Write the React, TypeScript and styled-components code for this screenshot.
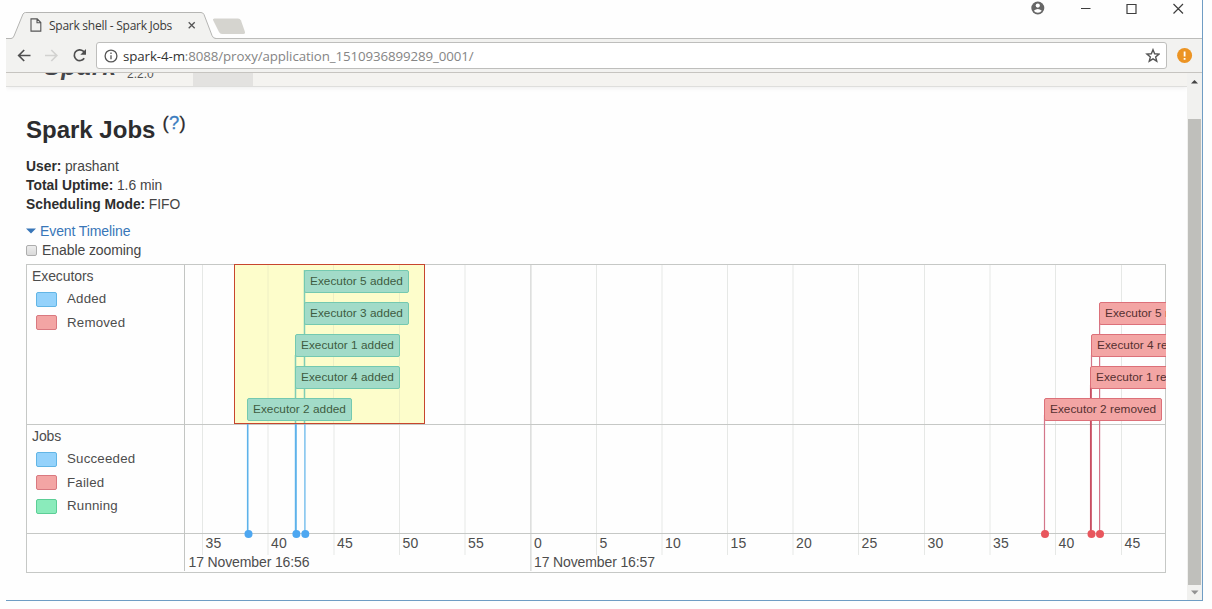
import React from "react";
import styled, { createGlobalStyle } from "styled-components";

const GlobalStyle = createGlobalStyle`
  *, *::before, *::after { box-sizing: border-box; }
  body { margin: 0; background: #fefefe; overflow: hidden; }
  #root { width: 1212px; height: 609px; }
`;

const Desktop = styled.div`
  width: 1212px;
  height: 609px;
  padding-left: 6px;
  background: #fefefe;
  font-family: "Liberation Sans", Arial, sans-serif;
  color: #333;
`;

const BrowserWindow = styled.div`
  display: flex;
  flex-direction: column;
  width: 1197px;
  height: 601px;
  border-right: 1px solid #6f9dc4;
  border-bottom: 1px solid #6f9dc4;
`;

const TabStrip = styled.div`
  position: relative;
  display: flex;
  justify-content: space-between;
  flex: none;
  height: 39px;
  border-bottom: 1px solid #bcbcba;
`;

const TabShapes = styled.svg`
  position: absolute;
  left: 0;
  top: 0;
`;

const Tab = styled.div`
  position: relative;
  display: flex;
  align-items: center;
  height: 26px;
  margin: 12px 0 0 24px;
`;

const TabTitle = styled.span`
  width: 138px;
  margin-left: 7px;
  font: 12px "Open Sans", "Noto Sans", sans-serif;
  letter-spacing: -0.26px;
  white-space: nowrap;
  color: #3a3a3a;
`;

const WindowControls = styled.div`
  display: flex;
  height: 18px;
  margin-right: 17px;
`;

const Toolbar = styled.div`
  display: flex;
  align-items: center;
  flex: none;
  height: 34px;
  background: #f2f2f0;
  border-bottom: 1px solid #c6c4c0;
`;

const NavIcons = styled.svg`
  flex: none;
`;

const AddressBar = styled.div`
  display: flex;
  align-items: center;
  width: 1071px;
  height: 27px;
  padding: 0 6px 0 7px;
  background: #fff;
  border: 1px solid #bebebc;
  border-radius: 3px;
`;

const Url = styled.span`
  flex: 1;
  margin-left: 5px;
  font: 13.3px "Open Sans", "Noto Sans", sans-serif;
  letter-spacing: -0.1px;
  white-space: nowrap;
  color: #858585;
`;

const UrlHost = styled.span`
  color: #333;
`;

const Warning = styled.svg`
  margin-left: 10px;
`;

const Viewport = styled.div`
  display: flex;
  flex: 1;
  min-height: 0;
`;

const Page = styled.main`
  width: 1181px;
  overflow: hidden;
`;

const SiteHeader = styled.div`
  display: flex;
  align-items: flex-end;
  height: 14px;
  background: #f4f3f0;
  border-bottom: 1px solid #dededc;
  box-shadow: 0 1px 5px rgba(0, 0, 0, 0.07);
  overflow: hidden;
`;

const Wordmark = styled.span`
  width: 80px;
  height: 28px;
  margin: 0 0 5px 38px;
  font-size: 24px;
  font-weight: bold;
  font-style: italic;
  letter-spacing: 1.3px;
  line-height: 28px;
  color: #45464a;
`;

const Version = styled.span`
  width: 69px;
  padding-left: 3px;
  margin-bottom: 5px;
  font-size: 12px;
  line-height: 14px;
  letter-spacing: 0;
  color: #555;
`;

const ActiveNav = styled.span`
  width: 60px;
  height: 13px;
  background: #e3e2e0;
`;

const Content = styled.div`
  padding: 26px 20px 0;
`;

const Heading = styled.h1`
  height: 40px;
  margin: 0;
  padding-top: 2px;
  font-size: 24px;
  line-height: 30px;
  white-space: pre;
  color: #2c2c2e;
`;

const Help = styled.sup`
  position: relative;
  top: -9px;
  left: 0.5px;
  font-size: 18.4px;
  font-weight: normal;
  line-height: 0;
  vertical-align: baseline;
  letter-spacing: 0.3px;
  color: #2c2c2e;
  -webkit-text-stroke: 0.3px currentColor;
`;

const HelpLink = styled.a`
  color: #3a7cc0;
`;

const Facts = styled.dl`
  margin: 4px 0 8px;
  font-size: 13.85px;
  line-height: 18.9px;
  color: #454545;
`;

const Fact = styled.div`
  display: flex;
  gap: 3.5px;
`;

const FactName = styled.dt`
  font-weight: bold;
  color: #2e2e2e;
`;

const FactValue = styled.dd`
  margin: 0;
`;

const TimelineToggle = styled.a`
  display: flex;
  align-items: center;
  gap: 4px;
  height: 19px;
  font-size: 14px;
  letter-spacing: -0.1px;
  color: #3876b8;
`;

const ZoomOption = styled.label`
  display: flex;
  align-items: center;
  gap: 5px;
  height: 19px;
  font-size: 14px;
  letter-spacing: -0.08px;
  color: #454545;
`;

const Box = styled.span`
  width: 11px;
  height: 11px;
  background: linear-gradient(#ececec, #dadada);
  border: 1px solid #adadad;
  border-radius: 2px;
`;

const Timeline = styled.section`
  display: flex;
  width: 1140px;
  height: 309px;
  margin-top: 4px;
  border: 1px solid #c6c8c6;
`;

const Groups = styled.div`
  width: 157px;
  flex: none;
`;

const Group = styled.div<{ $height: number }>`
  height: ${(p) => p.$height}px;
  padding: 2px 0 0 5px;
  border-bottom: 1px solid #c6c8c6;
  font-size: 14px;
  line-height: 18px;
  letter-spacing: -0.1px;
  color: #4d4d4d;
`;

const Legend = styled.div`
  display: flex;
  flex-direction: column;
  gap: 8px;
  margin-top: 7px;
`;

const LegendRow = styled.div`
  display: flex;
  align-items: center;
  gap: 10px;
  height: 15.5px;
  padding-left: 4px;
  font-size: 13.3px;
  letter-spacing: 0.2px;
`;

const Swatch = styled.span<{ $fill: string; $line: string }>`
  width: 21px;
  height: 15px;
  background: ${(p) => p.$fill};
  border: 1px solid ${(p) => p.$line};
  border-radius: 2px;
`;

const Plot = styled.div`
  position: relative;
  flex: 1;
  overflow: hidden;
`;

const Grid = styled.svg`
  display: block;
`;

const EventBox = styled.div<{ $x: number; $y: number; $w: number; $kind: "added" | "removed" }>`
  position: absolute;
  left: ${(p) => p.$x}px;
  top: ${(p) => p.$y}px;
  width: ${(p) => p.$w}px;
  height: 23px;
  padding-left: 5px;
  font-size: 11.8px;
  letter-spacing: 0.03px;
  line-height: 21px;
  white-space: nowrap;
  border: 1px solid ${(p) => (p.$kind === "added" ? "#74c9b0" : "#dc7079")};
  background: ${(p) => (p.$kind === "added" ? "#a2dbc8" : "#f3a5a4")};
  color: ${(p) => (p.$kind === "added" ? "#3e5c41" : "#553030")};
  border-radius: 2px;
`;

const Highlight = styled.div`
  position: absolute;
  left: 50px;
  top: -1px;
  width: 191px;
  height: 160px;
  background: #fdfdcb;
  border: 1px solid #c7452d;
`;

const PlotFrame = styled.div`
  position: relative;
  display: flex;
  flex: 1;
`;

const ScrollBar = styled.div`
  display: flex;
  flex-direction: column;
  align-items: center;
  width: 15px;
  background: #f1f1ef;
`;

const Thumb = styled.div`
  width: 13px;
  height: 466px;
  background: #bfbfbb;
`;

const ScrollArrow = styled.svg`
  flex: none;
`;

// Horizontal positions inside the plot, measured from the group column divider.
const ticks = [
  { x: 18, label: "35" }, { x: 83.5, label: "40" }, { x: 149.5, label: "45" },
  { x: 215, label: "50" }, { x: 280.5, label: "55" }, { x: 346.4, label: "0" },
  { x: 412, label: "5" }, { x: 477.5, label: "10" }, { x: 543, label: "15" },
  { x: 608.5, label: "20" }, { x: 674, label: "25" }, { x: 740, label: "30" },
  { x: 805.5, label: "35" }, { x: 871, label: "40" }, { x: 937, label: "45" },
];

type TimelineEvent = { x: number; y: number; w: number; text: string; kind: "added" | "removed" };

const events: TimelineEvent[] = [
  { x: 120, y: 5.5, w: 105, text: "Executor 5 added", kind: "added" },
  { x: 120, y: 37.5, w: 105, text: "Executor 3 added", kind: "added" },
  { x: 111, y: 69, w: 105, text: "Executor 1 added", kind: "added" },
  { x: 111, y: 101, w: 105, text: "Executor 4 added", kind: "added" },
  { x: 63, y: 133, w: 105, text: "Executor 2 added", kind: "added" },
  { x: 915, y: 37.5, w: 118, text: "Executor 5 removed", kind: "removed" },
  { x: 907, y: 69, w: 118, text: "Executor 4 removed", kind: "removed" },
  { x: 906, y: 101, w: 118, text: "Executor 1 removed", kind: "removed" },
  { x: 860, y: 133, w: 118, text: "Executor 2 removed", kind: "removed" },
];

function GroupPanel({ title, height, rows }: { title: string; height: number; rows: string[][] }) {
  return (
    <Group $height={height}>
      {title}
      <Legend>
        {rows.map(([label, fill, line]) => (
          <LegendRow key={label}><Swatch $fill={fill} $line={line} />{label}</LegendRow>
        ))}
      </Legend>
    </Group>
  );
}

function TimelineGrid() {
  return (
    <>
      {ticks.map((t) => {
        const minute = t.label === "0";
        return (
          <line key={t.x} x1={t.x + 0.5} x2={t.x + 0.5} y1={0} y2={minute ? 306 : 290}
            stroke={minute ? "#c9cbc9" : "#e6e8e6"} />
        );
      })}
      <path d="M0 159.5H982M0 268.5H982" stroke="#c6c8c6" />
      <path d="M0.5 0V306" stroke="#c3c5c3" />
    </>
  );
}

export default function App() {
  return (
    <>
      <GlobalStyle />
      <Desktop>
        <BrowserWindow>
          <TabStrip>
            <TabShapes width="260" height="39">
              <path d="M5 38.5 Q7 38.5 8 36 L17 14 Q18 12.5 19.5 12.5 H195 Q197 12.5 198 14.5 L206 35.5 Q207 38.5 210 38.5 V39 H5Z" fill="#f2f2f0" />
              <path d="M0 38.5H5 Q7 38.5 8 36 L17 14 Q18 12.5 19.5 12.5 H195 Q197 12.5 198 14.5 L206 35.5 Q207 38.5 210 38.5" fill="none" stroke="#b5b5b3" />
              <path d="M208.500 18.500 H232 Q234 18.500 235 20.500 L239 32 Q239.500 34 237.500 34 H216 Q214 34 213 32 L207 20 Q206.500 18.500 208.500 18.500Z" fill="#d5d4cf" />
            </TabShapes>
            <Tab>
              <svg width="12" height="14" viewBox="0 0 12 14" fill="none" stroke="#555" strokeWidth="1.1">
                <path d="M1 .9h6.200l3.600 3.600v8.600H1zM7 .9v3.800h3.800" />
              </svg>
              <TabTitle>Spark shell - Spark Jobs</TabTitle>
              <svg width="9" height="9" viewBox="0 0 9 9" stroke="#555" strokeWidth="1.3">
                <path d="M1.700 1.300l6 6M7.700 1.300l-6 6" />
              </svg>
            </Tab>
            <WindowControls>
              <svg width="156" height="18" viewBox="0 0 156 18" fill="none" stroke="#3e3e3e" strokeWidth="1.200">
                <circle cx="8.800" cy="8" r="6.500" fill="#666" stroke="none" />
                <circle cx="8.800" cy="5.600" r="2.100" fill="#fff" stroke="none" />
                <path d="M4.800 10.800Q6.800 9 8.800 9T12.800 10.800Q11.300 12.700 8.800 12.700T4.800 10.800Z" fill="#fff" stroke="none" />
                <path d="M52 8.500H61.500M98 4.500h9v9h-9zM144.500 4l9.500 9.500M154 4l-9.500 9.500" />
              </svg>
            </WindowControls>
          </TabStrip>

          <Toolbar>
            <NavIcons width="90" height="32" viewBox="0 0 90 32" fill="none" strokeWidth="1.700">
              <path d="M24.500 15.500H13M18.200 10L12.700 15.500l5.500 5.500" stroke="#4f4f4f" />
              <path d="M39 15.500h11.500M45.300 10l5.500 5.500-5.500 5.500" stroke="#d2d2d0" />
              <path d="M78.200 18.200A5.400 5.400 0 1 1 77.300 11.200L79 12.900" stroke="#4f4f4f" />
              <path d="M80 9v5.700h-5.700z" fill="#4f4f4f" />
            </NavIcons>
            <AddressBar>
              <svg width="14" height="14" viewBox="0 0 14 14" fill="none" stroke="#555" strokeWidth="1.300">
                <circle cx="7" cy="7" r="5.900" />
                <path d="M7 6.300v4M7 3.600v1.400" />
              </svg>
              <Url><UrlHost>spark-4-m</UrlHost>:8088/proxy/application_1510936899289_0001/</Url>
              <svg width="15" height="15" viewBox="0 0 15 15" fill="none" stroke="#555" strokeWidth="1.400">
                <path d="M8 1.700l1.650 4.100 4.400.3-3.400 2.800 1.100 4.300-3.750-2.400-3.750 2.400 1.100-4.300-3.400-2.800 4.400-.3z" />
              </svg>
            </AddressBar>
            <Warning width="16" height="16" viewBox="0 0 16 16">
              <circle cx="7.600" cy="7.500" r="7.500" fill="#ec9423" />
              <path d="M7.600 3.600v4.800M7.600 9.900v1.900" stroke="#fff" strokeWidth="1.800" />
            </Warning>
          </Toolbar>

          <Viewport>
            <Page>
              <SiteHeader>
                <Wordmark>Spark</Wordmark>
                <Version>2.2.0</Version>
                <ActiveNav />
              </SiteHeader>
              <Content>
                <Heading>Spark Jobs <Help>(<HelpLink>?</HelpLink>)</Help></Heading>
                <Facts>
                  <Fact><FactName>User:</FactName><FactValue>prashant</FactValue></Fact>
                  <Fact><FactName>Total Uptime:</FactName><FactValue>1.6 min</FactValue></Fact>
                  <Fact><FactName>Scheduling Mode:</FactName><FactValue>FIFO</FactValue></Fact>
                </Facts>
                <TimelineToggle>
                  <svg width="10" height="6"><path d="M0 .5h10L5 5.500z" fill="#3876b8" /></svg>
                  Event Timeline
                </TimelineToggle>
                <ZoomOption><Box />Enable zooming</ZoomOption>
                <Timeline>
                  <Groups>
                    <GroupPanel title="Executors" height={160} rows={[
                      ["Added", "#94d2fb", "#62b5e5"],
                      ["Removed", "#f3a5a4", "#d97980"],
                    ]} />
                    <GroupPanel title="Jobs" height={109} rows={[
                      ["Succeeded", "#94d2fb", "#62b5e5"],
                      ["Failed", "#f3a5a4", "#d97980"],
                      ["Running", "#8aebbb", "#5cce96"],
                    ]} />
                  </Groups>
                  <PlotFrame>
                    <Highlight />
                    <Plot>
                      <Grid width="982" height="307">
                        <defs>
                          <clipPath id="outside"><path d="M0 0H50V159H241V0H982V307H0Z" /></clipPath>
                        </defs>
                        <g clipPath="url(#outside)"><TimelineGrid /></g>
                        <path d="M84 0V158M149.500 0V158M215.500 0V158" stroke="#eeefc4" />
                        <path d="M120.500 5V158M111.500 90V158" stroke="#7fcdb4" strokeWidth="1.500" />
                        <path d="M63.700 159V268" stroke="#5db2ea" strokeWidth="1.600" />
                        <path d="M111.800 159V268" stroke="#5db2ea" strokeWidth="2" />
                        <path d="M120.900 159V268" stroke="#73bdec" strokeWidth="1.400" />
                        <path d="M860.500 150V268M915.600 58V268M907.500 90V120" stroke="#d3768a" strokeWidth="1.200" />
                        <path d="M906.900 120V268" stroke="#c84e62" strokeWidth="1.900" />
                        {[64.5, 112.4, 121.3].map((x) => <circle key={x} cx={x} cy="269" r="4" fill="#4da7f1" />)}
                        {[861, 907.5, 916].map((x) => <circle key={x} cx={x} cy="269" r="4" fill="#e8565d" />)}
                        <g fontSize="14" fill="#4d4d4d">
                          {ticks.map((t) => <text key={t.x} x={t.x + 3.6} y="282.500">{t.label}</text>)}
                          <text x="4.500" y="301.500" textLength="121">17 November 16:56</text>
                          <text x="350" y="301.500" textLength="121">17 November 16:57</text>
                        </g>
                      </Grid>
                      {events.map((e) => (
                        <EventBox key={e.text} $x={e.x} $y={e.y} $w={e.w} $kind={e.kind}>{e.text}</EventBox>
                      ))}
                    </Plot>
                  </PlotFrame>
                </Timeline>
              </Content>
            </Page>
            <ScrollBar>
              <ScrollArrow width="13" height="46" viewBox="0 0 13 46"><path d="M3 10.500h7L6.500 7z" fill="#444" /></ScrollArrow>
              <Thumb />
              <ScrollArrow width="13" height="15" viewBox="0 0 13 15"><path d="M3 5.500h7.500L6.750 9.500z" fill="#929292" /></ScrollArrow>
            </ScrollBar>
          </Viewport>
        </BrowserWindow>
      </Desktop>
    </>
  );
}
